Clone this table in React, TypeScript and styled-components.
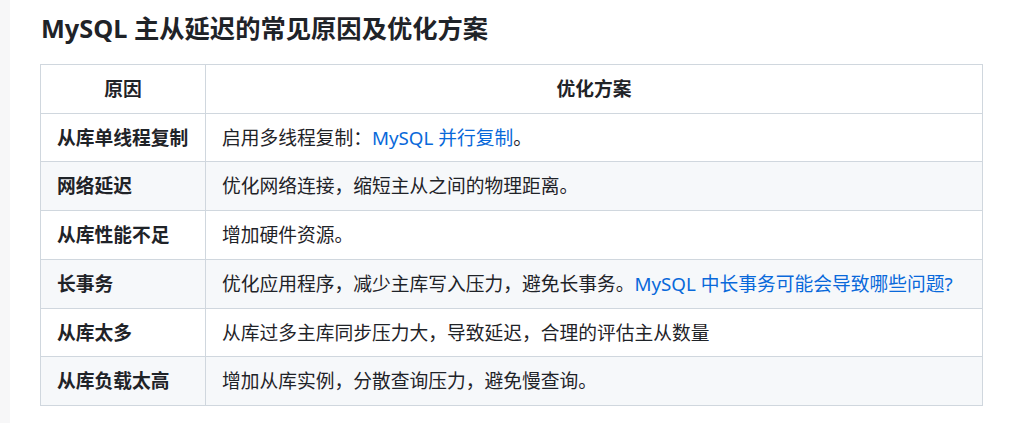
import styled, { createGlobalStyle } from 'styled-components';

const GlobalStyle = createGlobalStyle`
  body {
    margin: 0;
    background: #ffffff;
    font-family: "Noto Sans", "Noto Sans CJK SC", sans-serif;
    color: #1f2328;
  }
`;

const Page = styled.div`
  display: flex;
  min-height: 423px;
`;

const SideStrip = styled.div`
  width: 10px;
  flex-shrink: 0;
  background: #f7f7f8;
`;

const Content = styled.div`
  padding: 11px 0 0 30px;
  width: 943px;
`;

const Title = styled.h2`
  margin: 0 0 19px 1px;
  font-size: 25.3px;
  line-height: 34px;
  font-weight: 700;
  color: #1f2328;
`;

const Table = styled.table`
  width: 943px;
  border-collapse: collapse;
  font-size: 18.75px;
  line-height: 23.7px;
`;

const HeadCell = styled.th<{ $w?: number }>`
  box-sizing: border-box;
  border: 1px solid #d0d7de;
  padding: 12px 16px;
  font-weight: 700;
  text-align: center;
  width: ${p => (p.$w ? `${p.$w}px` : 'auto')};
`;

const Row = styled.tr<{ $alt: boolean }>`
  background: ${p => (p.$alt ? '#f6f8fa' : '#ffffff')};
`;

const Cell = styled.td<{ $bold?: boolean }>`
  border: 1px solid #d0d7de;
  padding: 12px 16px;
  font-weight: ${p => (p.$bold ? 700 : 400)};
  color: #1f2328;
  white-space: nowrap;
`;

const Link = styled.a`
  color: #0969da;
  text-decoration: none;
`;

const rows: { cause: string; fix: React.ReactNode }[] = [
  { cause: '从库单线程复制', fix: <>启用多线程复制：<Link href="#">MySQL 并行复制</Link>。</> },
  { cause: '网络延迟', fix: '优化网络连接，缩短主从之间的物理距离。' },
  { cause: '从库性能不足', fix: '增加硬件资源。' },
  { cause: '长事务', fix: <>优化应用程序，减少主库写入压力，避免长事务。<Link href="#">MySQL 中长事务可能会导致哪些问题?</Link></> },
  { cause: '从库太多', fix: '从库过多主库同步压力大，导致延迟，合理的评估主从数量' },
  { cause: '从库负载太高', fix: '增加从库实例，分散查询压力，避免慢查询。' },
];

export default function App() {
  return (
    <Page>
      <GlobalStyle />
      <SideStrip />
      <Content>
        <Title>MySQL 主从延迟的常见原因及优化方案</Title>
        <Table>
          <thead>
            <tr>
              <HeadCell $w={165}>原因</HeadCell>
              <HeadCell>优化方案</HeadCell>
            </tr>
          </thead>
          <tbody>
            {rows.map((r, i) => (
              <Row key={r.cause} $alt={i % 2 === 1}>
                <Cell $bold>{r.cause}</Cell>
                <Cell>{r.fix}</Cell>
              </Row>
            ))}
          </tbody>
        </Table>
      </Content>
    </Page>
  );
}
